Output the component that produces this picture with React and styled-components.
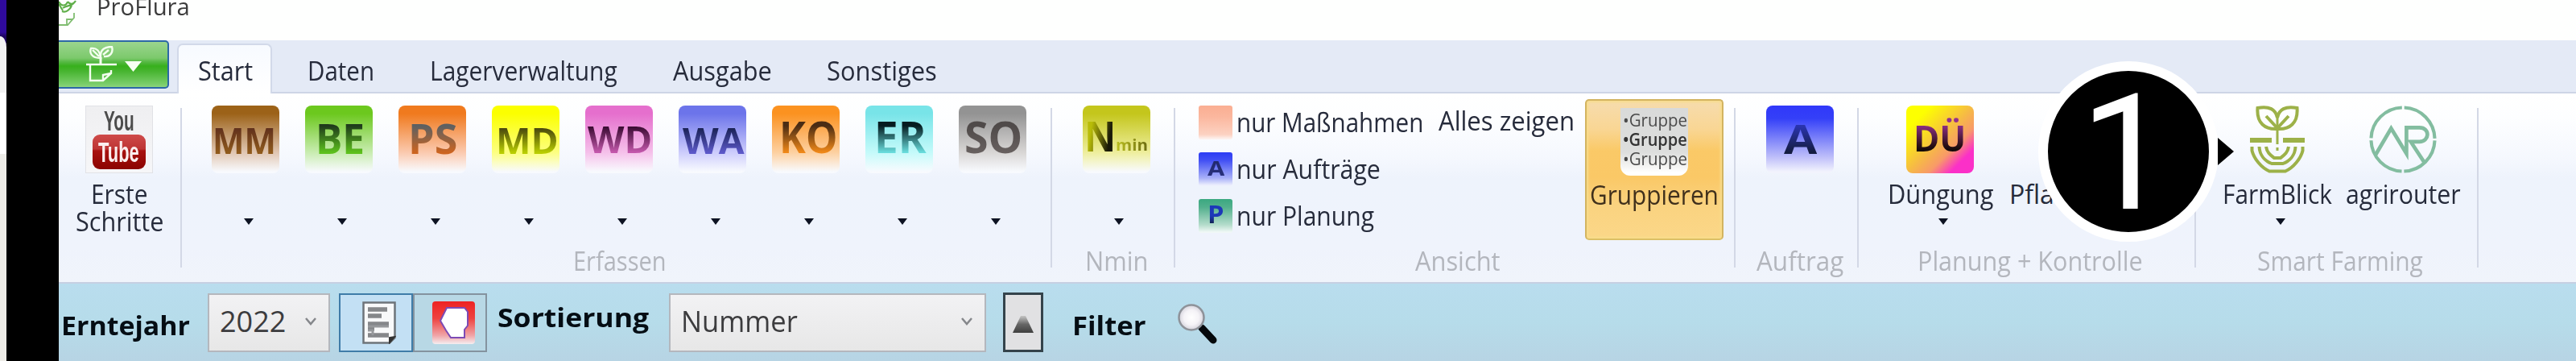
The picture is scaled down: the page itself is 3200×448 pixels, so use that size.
import React, { useLayoutEffect, useRef, useState } from "react";
import styled, { createGlobalStyle } from "styled-components";

const Global = createGlobalStyle`
  * { box-sizing: border-box; }
  body { margin: 0; overflow: hidden; background: #000; }
  svg { display: block; flex: none; }
`;

/* ---------- text set to a fixed measure ---------- */

const Measure = styled.span`
  display: block;
  flex: none;
  width: ${(p) => p.$w}px;
  height: ${(p) => p.$lh}px;
  padding-top: 1px;
  font: ${(p) => p.$weight} ${(p) => p.$size}px/${(p) => p.$lh}px "Open Sans", "Noto Sans", sans-serif;
  color: ${(p) => p.$color};
`;

const Run = styled.span`
  display: inline-block;
  white-space: nowrap;
  margin-left: -2px;
  transform-origin: 0 50%;
  ${(p) =>
    p.$ink &&
    `background: ${p.$ink}; -webkit-background-clip: text; background-clip: text; color: transparent;`}
`;

function Text({ w, size = 32, lh = 34, weight = 400, color = "#262b3b", ink, children }) {
  const ref = useRef(null);
  const [scale, setScale] = useState(1);
  useLayoutEffect(() => {
    setScale((w + 4) / ref.current.offsetWidth);
  }, [w, children]);
  return (
    <Measure $w={w} $size={size} $lh={lh} $weight={weight} $color={color}>
      <Run ref={ref} $ink={ink} style={{ transform: `scaleX(${scale})` }}>
        {children}
      </Run>
    </Measure>
  );
}

/* ---------- page frame ---------- */

const Screen = styled.div`
  position: relative;
  display: flex;
  width: 3200px;
  height: 448px;
  overflow: hidden;
  background: #000;
`;

const Desktop = styled.div`
  flex: none;
  width: 8px;
  margin-right: 65px;
  padding-top: 45px;
  background: linear-gradient(#2f0a9c 40px, #1d0560 45px);
`;

const Sheet = styled.div`
  height: 403px;
  border-top-right-radius: 8px 14px;
  background: linear-gradient(#f2f2f2 70px, #fff 70px, #fff 146px, #edece7 146px);
`;

const Window = styled.div`
  flex: 1;
  display: flex;
  flex-direction: column;
  background: #fff;
`;

const TitleBar = styled.div`
  display: flex;
  flex: none;
  height: 50px;
  background: #fefffe;
  overflow: hidden;
`;

const TitleText = styled.div`
  margin: -10px 0 0 27px;
`;

const TabBar = styled.div`
  display: flex;
  flex: none;
  height: 66px;
  background: #e4eaf6;
  border-bottom: 2px solid #cdd5e6;
`;

const AppButton = styled.div`
  display: flex;
  flex: none;
  width: 137px;
  height: 60px;
  margin-right: 10px;
  padding: 5px 0 0 34px;
  border: 2px solid #2c68a6;
  border-left: 0;
  border-radius: 0 5px 5px 0;
  background: linear-gradient(#9bd58e 0, #7cc96c 20px, #55b843 25px, #37b01c 30px, #46b42f 36px, #79cd69 52px, #8bd47d 100%);
  gap: 10px;
`;

const Tab = styled.div`
  flex: none;
  height: ${(p) => (p.$active ? 62 : 60)}px;
  margin-top: 4px;
  width: ${(p) => p.$w}px;
  padding: 16px 0 0 ${(p) => p.$pad}px;
  ${(p) =>
    p.$active &&
    `border: 2px solid #d2d9e9; border-bottom: 0; border-radius: 7px 7px 0 0;
     background: linear-gradient(#f7faff, #fff); padding-top: 14px;`}
`;

const Ribbon = styled.div`
  display: flex;
  flex: none;
  height: 236px;
  background: linear-gradient(#fff 0, #fdfeff 30px, #f5f8fe 80px, #eef3fc 105px, #eff3fc 190px, #f0f4fb 100%);
  border-bottom: 2px solid #c6d0e2;
`;

const Group = styled.div`
  display: flex;
  flex-direction: column;
  flex: none;
  width: ${(p) => p.$w}px;
  padding-left: 8px;
`;

const GroupItems = styled.div`
  display: flex;
  align-items: flex-start;
  height: 190px;
  padding-left: ${(p) => p.$pad || 0}px;
`;

const GroupName = styled.div`
  display: flex;
  justify-content: center;
`;

const Separator = styled.div`
  flex: none;
  width: 2px;
  height: 198px;
  margin-top: 18px;
  background: #d3d8e6;
`;

const BigButton = styled.div`
  display: flex;
  flex-direction: column;
  align-items: center;
  flex: none;
  width: ${(p) => p.$w}px;
  padding-top: 15px;
  margin-left: ${(p) => p.$ml || 0}px;
`;

const Caption = styled.div`
  display: flex;
  flex-direction: column;
  align-items: center;
  min-height: 34px;
  margin-top: 8px;
`;

const Arrow = styled.i`
  width: 0;
  height: 0;
  margin: 14px 0 0 7px;
  border: 6px solid transparent;
  border-top: 8px solid #0d1222;
  border-bottom: 0;
`;

const Tile = styled.div`
  flex: none;
  width: ${(p) => p.$s || 84}px;
  height: ${(p) => p.$s || 84}px;
  padding-left: ${(p) => p.$pad}px;
  display: flex;
  gap: ${(p) => p.$gap || 0}px;
  border-radius: ${(p) => (p.$s ? 3 : 8)}px;
  background: ${(p) => p.$bg};
`;

const SmallTiles = styled.div`
  flex: none;
  width: 300px;
  padding-top: 15px;
`;

const SmallRow = styled.div`
  display: flex;
  gap: 7px;
  height: 58px;
`;

const RowText = styled.div`
  margin-top: 3px;
`;

const ShowAll = styled.div`
  flex: none;
  width: 180px;
  padding-top: 16px;
`;

const GroupToggle = styled.div`
  display: flex;
  flex-direction: column;
  align-items: center;
  flex: none;
  width: 172px;
  height: 175px;
  margin-top: 7px;
  padding-top: 9px;
  border: 2px solid #d3b460;
  border-bottom-color: #dcc065;
  border-radius: 5px;
  box-shadow: inset 0 0 3px 2px #f8dd8c;
  background: linear-gradient(#f6dcae 0, #f9d694 35px, #fac967 62px, #fac866 95px, #fad380 130px, #fbd788 100%);
  gap: 6px;
`;

const BulletIcon = styled.div`
  width: 84px;
  height: 84px;
  padding: 1px 0 0 5px;
  border-radius: 0 0 12px 12px;
  background: linear-gradient(#d9dad9 0, #dddedd 55px, #f4f4f2 72px, #fff 80px);
`;

const FilterBar = styled.div`
  display: flex;
  flex: 1;
  align-items: flex-start;
  background: linear-gradient(#b9ddee, #b6dcea 50%, #b7d4e4);
`;

const Heading = styled.div`
  flex: none;
  width: ${(p) => p.$w}px;
  padding: ${(p) => p.$top}px 0 0 ${(p) => p.$pad || 0}px;
`;

const Combo = styled.div`
  display: flex;
  justify-content: space-between;
  flex: none;
  width: ${(p) => p.$w}px;
  height: 73px;
  margin: 12px ${(p) => p.$mr}px 0 0;
  padding: 9px 15px 0 15px;
  border: 2px solid #b4b7bd;
  background: linear-gradient(#f2f2f4, #e7e7e7);
`;

const Toggle = styled.div`
  flex: none;
  width: 92px;
  height: 73px;
  margin: 12px ${(p) => p.$mr || 0}px 0 0;
  padding: 8px 0 0 ${(p) => p.$pad}px;
  border: 2px solid ${(p) => (p.$on ? "#3f7ca8" : "#84939f")};
  background: ${(p) => (p.$on ? "#c3e0f4" : "#b8d8e5")};
`;

const SortButton = styled.div`
  flex: none;
  width: 50px;
  height: 74px;
  margin: 11px 38px 0 0;
  padding: 24px 0 0 9px;
  border: 3px solid #34434b;
  background: #e1e1e3;
`;

/* ---------- numbered callout ---------- */

const Callout = styled.div`
  position: absolute;
  left: 2532px;
  top: 76px;
  width: 224px;
  height: 224px;
  border: 12px solid #fff;
  border-radius: 50%;
  background: #000;
  color: #fff;
  font: 400 201px/200px Roboto, sans-serif;
  padding-left: 40px;
`;

const Digit = styled.span`
  display: block;
  margin-top: 3px;
`;

const Pointer = styled.i`
  position: absolute;
  left: 2755px;
  top: 171px;
  border: 17.5px solid transparent;
  border-left: 20px solid #000;
  border-right: 0;
`;

/* ---------- drawings ---------- */

const TitleIcon = () => (
  <svg width="22" height="34" viewBox="0 0 22 34" fill="none" stroke="#5fae49" strokeWidth="2.2">
    <path d="M0 2 C3 8 9 8 11 2 M11 2 C14 6 18 6 21 1 M5 10 C10 6 17 8 19 3 M4 14 C9 16 14 12 16 7 M0 5 L5 13" />
    <path d="M0 31 H11 L19 22 V16 M10 30 V24 H17" stroke="#80bd70" strokeWidth="1.8" />
  </svg>
);

const PotIcon = () => (
  <svg width="38" height="46" viewBox="0 0 38 46" fill="none" stroke="#f4fff0" strokeWidth="2.4">
    <path d="M0 23 H38" />
    <path d="M5 23 V43 H21 L31 34 V30 M21 42 V36 L31 34" />
    <path d="M18 23 V14" strokeWidth="3" />
    <path d="M18 15 C6 15 4 8 6 3 C13 2 17 6 18 15 Z M8 5 L16 13" />
    <path d="M18 14 C17 4 24 1 32 1 C34 8 30 14 22 13 M21 11 L28 5" />
  </svg>
);

const MenuTriangle = () => (
  <svg width="21" height="34" viewBox="0 0 21 34">
    <path d="M0 19 H21 L10.5 32 Z" fill="#f7fff4" />
  </svg>
);

const YouTubeFrame = styled.div`
  display: flex;
  flex-direction: column;
  align-items: center;
  width: 84px;
  height: 84px;
  padding-top: 1px;
  border: 1px solid #e1e2e6;
  background: linear-gradient(#efeff1, #f6f6f8);
`;

const YouTubeRed = styled.div`
  display: flex;
  justify-content: center;
  width: 66px;
  height: 43px;
  border-radius: 9px;
  background: linear-gradient(#cf4a49 0, #bd3534 18px, #a81210 20px, #8b0300 100%);
`;

const Condensed = styled.span`
  display: block;
  height: ${(p) => p.$h}px;
  font: bold 35px/${(p) => p.$h}px "Liberation Sans Narrow", "Liberation Sans", sans-serif;
  color: ${(p) => p.$c};
  width: ${(p) => p.$w}px;
`;

const Squeeze = styled.span`
  display: inline-block;
  transform: scaleX(${(p) => p.$x});
  transform-origin: 0 50%;
`;

function Narrow({ w, h, c, natural, children }) {
  return (
    <Condensed $w={w} $h={h} $c={c}>
      <Squeeze $x={w / natural}>{children}</Squeeze>
    </Condensed>
  );
}

const FarmBlickIcon = () => (
  <svg width="68" height="84" viewBox="0 0 68 84" fill="none" stroke="#9cb148" strokeWidth="4">
    <path d="M34 29 C19 30 8 22 9.5 3 C24 0 32 5 34 15 C36 5 44 0 58.5 3 C60 22 49 30 34 29" />
    <path d="M34 28 L20 13 M34 28 L48 13" />
    <path d="M34 15 V48 M34 52 V56" strokeWidth="3" />
    <path d="M0 43 H27 M41 43 H68" strokeWidth="6" />
    <path d="M2.5 51 V56 C5 66 14 77 24 81.5 H44 C54 77 63 66 65.5 56 V51" />
    <path d="M11.5 51 C12 62 19 69 27 72 H41 C49 69 56 62 56.5 51" />
    <path d="M20 51 C21 58 25 61 30 65 H38 C43 61 47 58 48 51" />
  </svg>
);

const AgrirouterIcon = () => (
  <svg width="84" height="84" viewBox="0 0 86 86" fill="none" stroke="#83bda0" strokeWidth="4.2">
    <circle cx="43" cy="43" r="40.5" strokeDasharray="60.6 3" strokeDashoffset="-1.5" />
    <path d="M8 63 L28 29 L47.5 61 V28 H64 C78 28 77 46 64 46 H53 L70 72" strokeWidth="4.8" />
  </svg>
);

const DocIcon = () => (
  <svg width="42" height="53" viewBox="0 0 42 53">
    <path d="M1.5 1.5 H40.5 V45 L34 51.5 H1.5 Z" fill="#f8f9fa" stroke="#6e747a" strokeWidth="2.5" />
    <path d="M40 44 L34 51 V45 Z" fill="#333" stroke="#333" strokeWidth="2" />
    <path d="M7 10 H31 M7 18 H24 M7 28 H33 M7 34 H15 M7 42 H33" stroke="#85878a" strokeWidth="5.5" />
    <path d="M7 31 H33 M7 36 H13 V42" stroke="#96989b" strokeWidth="3" fill="none" />
  </svg>
);

const FieldIcon = () => (
  <svg width="53" height="53" viewBox="0 0 53 53">
    <defs>
      <linearGradient id="field" x1="0" y1="0" x2="0" y2="1">
        <stop offset="0" stopColor="#ee2222" />
        <stop offset="0.4" stopColor="#ee4340" />
        <stop offset="0.8" stopColor="#f0a5a8" />
        <stop offset="1" stopColor="#f5eef0" />
      </linearGradient>
    </defs>
    <rect width="53" height="53" rx="4" fill="url(#field)" />
    <path d="M18 8 H40 L44 13 V30 L40 35 V45 H23 L17 36 L10 24 Z" fill="#fff" stroke="#7d4bb5" strokeWidth="2" />
  </svg>
);

const Chevron = () => (
  <svg width="14" height="46" viewBox="0 0 14 46">
    <path d="M1 20 L7 27 L13 20" fill="none" stroke="#85878b" strokeWidth="2.5" />
  </svg>
);

const SortTriangle = () => (
  <svg width="26" height="24" viewBox="0 0 26 24">
    <defs>
      <linearGradient id="sort" x1="0" y1="0" x2="0" y2="1">
        <stop offset="0" stopColor="#c5c5c5" />
        <stop offset="0.5" stopColor="#666" />
        <stop offset="1" stopColor="#3f3f3f" />
      </linearGradient>
    </defs>
    <path d="M10 2 H16 L26 23 H0 Z" fill="url(#sort)" />
  </svg>
);

const Magnifier = styled.svg`
  margin: 25px 0 0 41px;
`;

const SearchIcon = () => (
  <Magnifier width="50" height="51" viewBox="0 0 50 51">
    <defs>
      <radialGradient id="lens">
        <stop offset="0" stopColor="#fff" />
        <stop offset="0.6" stopColor="#f5f3f7" />
        <stop offset="1" stopColor="#d5d3dc" />
      </radialGradient>
    </defs>
    <path d="M26 27 L31 32" stroke="#555" strokeWidth="5" />
    <path d="M30 30 L44 45" stroke="#05090c" strokeWidth="9" strokeLinecap="round" />
    <circle cx="17" cy="17" r="15.5" fill="url(#lens)" stroke="#8e9299" strokeWidth="2.5" />
  </Magnifier>
);

/* ---------- content ---------- */

const fade = (a, b, c = "rgba(255,255,255,0.5)") => `linear-gradient(${a} 0, ${a} 10px, ${b} 58px, ${c} 82px)`;
const inkOf = (a, b) => `linear-gradient(${a} 24px, ${b} 57px)`;

const tiles = [
  { t: "MM", x: 3, w: 75, s: 45, bg: fade("#9c6218", "#e0c6b2"), ink: ["#5c2c1c", "#8f5a1c"] },
  { t: "BE", x: 15, w: 57, s: 52, bg: fade("#6cc81e", "#c8ecb0"), ink: ["#1f3a1c", "#5cc01c"] },
  { t: "PS", x: 14, w: 57, s: 52, bg: fade("#f07a1e", "#fbc9ae"), ink: ["#5c6062", "#cc6420"] },
  { t: "MD", x: 7, w: 74, s: 45, bg: fade("#fbff00", "#fdff80"), ink: ["#3c3810", "#b8cc00"] },
  { t: "WD", x: 5, w: 76, s: 47, bg: fade("#e56fcd", "#f5c0ea"), ink: ["#33082c", "#c458ac"] },
  { t: "WA", x: 7, w: 73, s: 45, bg: fade("#6c74ea", "#ccccfc"), ink: ["#121c48", "#5c58c8"] },
  { t: "KO", x: 11, w: 68, s: 53, bg: fade("#fb9220", "#fdd0a0"), ink: ["#4a2c14", "#f08818"] },
  { t: "ER", x: 13, w: 61, s: 53, bg: fade("#78e4e8", "#c4fafa"), ink: ["#051c20", "#68dcdc"] },
  { t: "SO", x: 9, w: 68, s: 53, bg: fade("#939393", "#d8d6d5"), ink: ["#4f4a49", "#67605f"] },
];

const TileText = ({ w, s, ink, base = 59, children }) => (
  <Text w={w} size={s} weight={700} lh={2 * (base - 0.388 * s)} ink={ink}>
    {children}
  </Text>
);

const views = [
  { text: "nur Maßnahmen", w: 228, bg: "linear-gradient(#faae92 0, #fbb79e 14px, #fcd2c2 36px, #fdf0ec 41px)" },
  {
    text: "nur Aufträge",
    w: 175,
    bg: "linear-gradient(#2c3cf4 0, #4250f4 10px, #a8b0f8 32px, #eef0fd 41px)",
    mark: { t: "A", w: 17, s: 25, base: 28, ink: "linear-gradient(#1c2468, #2c3480)" },
  },
  {
    text: "nur Planung",
    w: 167,
    bg: "linear-gradient(#3aa880 0, #52b08d 10px, #b4dccb 32px, #f0f8f6 41px)",
    mark: { t: "P", w: 16, s: 31, base: 30, ink: "linear-gradient(#1c38b8 20px, #102048 30px)" },
  },
];

const Name = ({ w, children }) => (
  <GroupName>
    <Text w={w} color="#b3b6bd">
      {children}
    </Text>
  </GroupName>
);

export default function App() {
  return (
    <Screen>
      <Global />
      <Desktop>
        <Sheet />
      </Desktop>
      <Window>
        <TitleBar>
          <TitleIcon />
          <TitleText>
            <Text w={112} size={29} color="#3c3c3c">ProFlura</Text>
          </TitleText>
        </TitleBar>
        <TabBar>
          <AppButton>
            <PotIcon />
            <MenuTriangle />
          </AppButton>
          <Tab $active $w={118} $pad={26}>
            <Text w={64}>Start</Text>
          </Tab>
          <Tab $w={152} $pad={46}>
            <Text w={79}>Daten</Text>
          </Tab>
          <Tab $w={302} $pad={46}>
            <Text w={229}>Lagerverwaltung</Text>
          </Tab>
          <Tab $w={191} $pad={46}>
            <Text w={119}>Ausgabe</Text>
          </Tab>
          <Tab $w={206} $pad={46}>
            <Text w={133}>Sonstiges</Text>
          </Tab>
        </TabBar>
        <Ribbon>
          <Group $w={151}>
            <GroupItems>
              <BigButton $w={134}>
                <YouTubeFrame>
                  <Narrow w={38} h={34} natural={64} c="#4c4c4c">You</Narrow>
                  <YouTubeRed>
                    <Narrow w={52} h={43} natural={83} c="#fbeeee">Tube</Narrow>
                  </YouTubeRed>
                </YouTubeFrame>
                <Caption>
                  <Text w={66}>Erste</Text>
                  <Text w={105}>Schritte</Text>
                </Caption>
              </BigButton>
            </GroupItems>
          </Group>
          <Separator />
          <Group $w={1079}>
            <GroupItems $pad={13}>
              {tiles.map((k) => (
                <BigButton key={k.t} $w={116}>
                  <Tile $bg={k.bg} $pad={k.x}>
                    <TileText w={k.w} s={k.s} ink={inkOf(...k.ink)}>{k.t}</TileText>
                  </Tile>
                  <Caption />
                  <Arrow />
                </BigButton>
              ))}
            </GroupItems>
            <Name w={112}>Erfassen</Name>
          </Group>
          <Separator />
          <Group $w={151}>
            <GroupItems>
              <BigButton $w={143}>
                <Tile $bg={fade("#c4c61c", "#eeee9c")} $pad={4} $gap={4}>
                  <TileText w={35} s={52} base={56} ink="linear-gradient(100deg, #b8bc08 25%, #6c6c08 50%, #181808 75%)">N</TileText>
                  <TileText w={36} s={20} base={56} ink="linear-gradient(90deg, #bcc020, #6c6c10)">min</TileText>
                </Tile>
                <Caption />
                <Arrow />
              </BigButton>
            </GroupItems>
            <Name w={74}>Nmin</Name>
          </Group>
          <Separator />
          <Group $w={694}>
            <GroupItems $pad={21}>
              <SmallTiles>
                {views.map((v) => (
                  <SmallRow key={v.text}>
                    <Tile $s={42} $bg={v.bg} $pad={13}>
                      {v.mark && (
                        <TileText w={v.mark.w} s={v.mark.s} base={v.mark.base} ink={v.mark.ink}>
                          {v.mark.t}
                        </TileText>
                      )}
                    </Tile>
                    <RowText>
                      <Text w={v.w}>{v.text}</Text>
                    </RowText>
                  </SmallRow>
                ))}
              </SmallTiles>
              <ShowAll>
                <Text w={165}>Alles zeigen</Text>
              </ShowAll>
              <GroupToggle>
                <BulletIcon>
                  <Text w={76} size={22} lh={24} color="#4a4a4a">•Gruppe</Text>
                  <Text w={76} size={22} lh={24} weight={600} color="#333">•Gruppe</Text>
                  <Text w={76} size={22} lh={24} color="#4a4a4a">•Gruppe</Text>
                </BulletIcon>
                <Text w={156} color="#40301c">Gruppieren</Text>
              </GroupToggle>
            </GroupItems>
            <Name w={102}>Ansicht</Name>
          </Group>
          <Separator />
          <Group $w={151}>
            <GroupItems>
              <BigButton $w={143}>
                <Tile $bg="linear-gradient(#3038fa 0, #3440f8 16px, #c4c4fa 66px, #f2f3fd 82px)" $pad={24}>
                  <TileText w={37} s={51} ink={inkOf("#2a34b0", "#141c40")}>A</TileText>
                </Tile>
              </BigButton>
            </GroupItems>
            <Name w={104}>Auftrag</Name>
          </Group>
          <Separator />
          <Group $w={417}>
            <GroupItems $pad={9}>
              <BigButton $w={168}>
                <Tile $bg="linear-gradient(135deg, #fdff00 18%, #f6bb44 50%, #f89a68 66%, #fb30c8 82%)" $pad={11}>
                  <TileText w={61} s={45} base={56} ink="linear-gradient(#93308c 22px, #2c1018 48px, #100808 55px)">DÜ</TileText>
                </Tile>
                <Caption>
                  <Text w={127}>Düngung</Text>
                </Caption>
                <Arrow />
              </BigButton>
              <BigButton $w={80}>
                <Tile $pad={0} $bg="none" />
                <Caption>
                  <Text w={72}>Pflan</Text>
                </Caption>
              </BigButton>
            </GroupItems>
            <Name w={276}>Planung + Kontrolle</Name>
          </Group>
          <Separator />
          <Group $w={349}>
            <GroupItems $pad={23}>
              <BigButton $w={140}>
                <FarmBlickIcon />
                <Caption>
                  <Text w={132}>FarmBlick</Text>
                </Caption>
                <Arrow />
              </BigButton>
              <BigButton $w={148} $ml={12}>
                <AgrirouterIcon />
                <Caption>
                  <Text w={139}>agrirouter</Text>
                </Caption>
              </BigButton>
            </GroupItems>
            <Name w={202}>Smart Farming</Name>
          </Group>
          <Separator />
        </Ribbon>
        <FilterBar>
          <Heading $w={185} $top={34} $pad={5}>
            <Text w={156} weight={700} color="#050d14">Erntejahr</Text>
          </Heading>
          <Combo $w={152} $mr={11}>
            <Text w={78} size={36} lh={46} color="#3c3c3e">2022</Text>
            <Chevron />
          </Combo>
          <Toggle $on $pad={27}>
            <DocIcon />
          </Toggle>
          <Toggle $pad={22} $mr={15}>
            <FieldIcon />
          </Toggle>
          <Heading $w={211} $top={24}>
            <Text w={184} weight={700} color="#050d14">Sortierung</Text>
          </Heading>
          <Combo $w={394} $mr={21}>
            <Text w={141} size={36} lh={46} color="#3c3c3e">Nummer</Text>
            <Chevron />
          </Combo>
          <SortButton>
            <SortTriangle />
          </SortButton>
          <Heading $w={88} $top={34}>
            <Text w={87} weight={700} color="#050d14">Filter</Text>
          </Heading>
          <SearchIcon />
        </FilterBar>
      </Window>
      <Callout>
        <Digit>1</Digit>
      </Callout>
      <Pointer />
    </Screen>
  );
}
